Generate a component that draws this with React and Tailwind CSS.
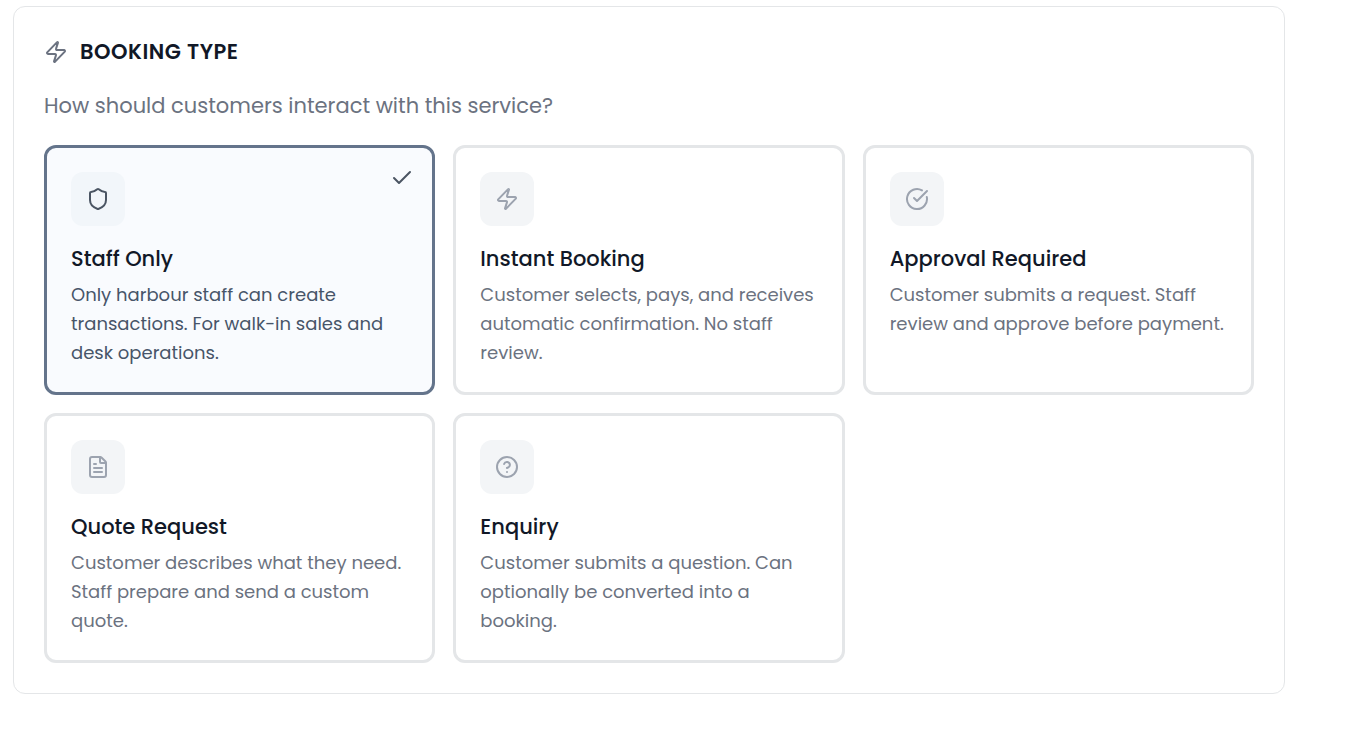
import { useState } from "react";
import { Zap, Shield, CircleCheckBig, FileText, CircleQuestionMark, Check } from "lucide-react";

const TYPES = [
  {
    id: "staff",
    icon: Shield,
    title: "Staff Only",
    text: "Only harbour staff can create transactions. For walk-in sales and desk operations.",
  },
  {
    id: "instant",
    icon: Zap,
    title: "Instant Booking",
    text: "Customer selects, pays, and receives automatic confirmation. No staff review.",
  },
  {
    id: "approval",
    icon: CircleCheckBig,
    title: "Approval Required",
    text: "Customer submits a request. Staff review and approve before payment.",
  },
  {
    id: "quote",
    icon: FileText,
    title: "Quote Request",
    text: "Customer describes what they need. Staff prepare and send a custom quote.",
  },
  {
    id: "enquiry",
    icon: CircleQuestionMark,
    title: "Enquiry",
    text: "Customer submits a question. Can optionally be converted into a booking.",
  },
];

function TypeCard({ type, selected, onSelect }) {
  const Icon = type.icon;
  return (
    <button
      type="button"
      aria-pressed={selected}
      onClick={onSelect}
      className={`relative flex flex-col items-start rounded-xl border-3 px-6 pt-6 pb-[25px] text-left ${
        selected ? "border-[#64748b] bg-[#f9fbfe]" : "border-[#e4e6e8] bg-white"
      }`}
    >
      {selected && <Check size={24} className="absolute top-[18px] right-[18px] text-[#4b5563]" />}
      <span
        className={`flex size-[54px] items-center justify-center rounded-xl ${
          selected ? "bg-[#f2f6fa] text-[#4b5563]" : "bg-[#f3f5f7] text-[#9ca3af]"
        }`}
      >
        <Icon size={24} />
      </span>
      <span className="mt-[17px] text-[21px] leading-[31px] font-medium text-[#111827]">{type.title}</span>
      <span className={`mt-[6px] text-[18px] leading-[29px] ${selected ? "text-[#475569]" : "text-[#6b7280]"}`}>
        {type.text}
      </span>
    </button>
  );
}

export default function App() {
  const [selected, setSelected] = useState("staff");
  return (
    <main className="pt-[6px] pr-[60px] pb-9 pl-[13px] font-['Poppins','Inter',sans-serif]">
      <section className="rounded-xl border border-[#e4e6e8] bg-white p-[30px]">
        <h2 className="flex items-center gap-3 text-[21px] leading-[30px] font-semibold tracking-wide text-[#111827] uppercase">
          <Zap size={24} className="text-[#6b7280]" />
          Booking Type
        </h2>
        <p className="mt-6 text-[21px] leading-[30px] text-[#6b7280]">
          How should customers interact with this service?
        </p>
        <div className="mt-6 grid grid-cols-3 gap-[18px]">
          {TYPES.map((type) => (
            <TypeCard
              key={type.id}
              type={type}
              selected={selected === type.id}
              onSelect={() => setSelected(type.id)}
            />
          ))}
        </div>
      </section>
    </main>
  );
}
